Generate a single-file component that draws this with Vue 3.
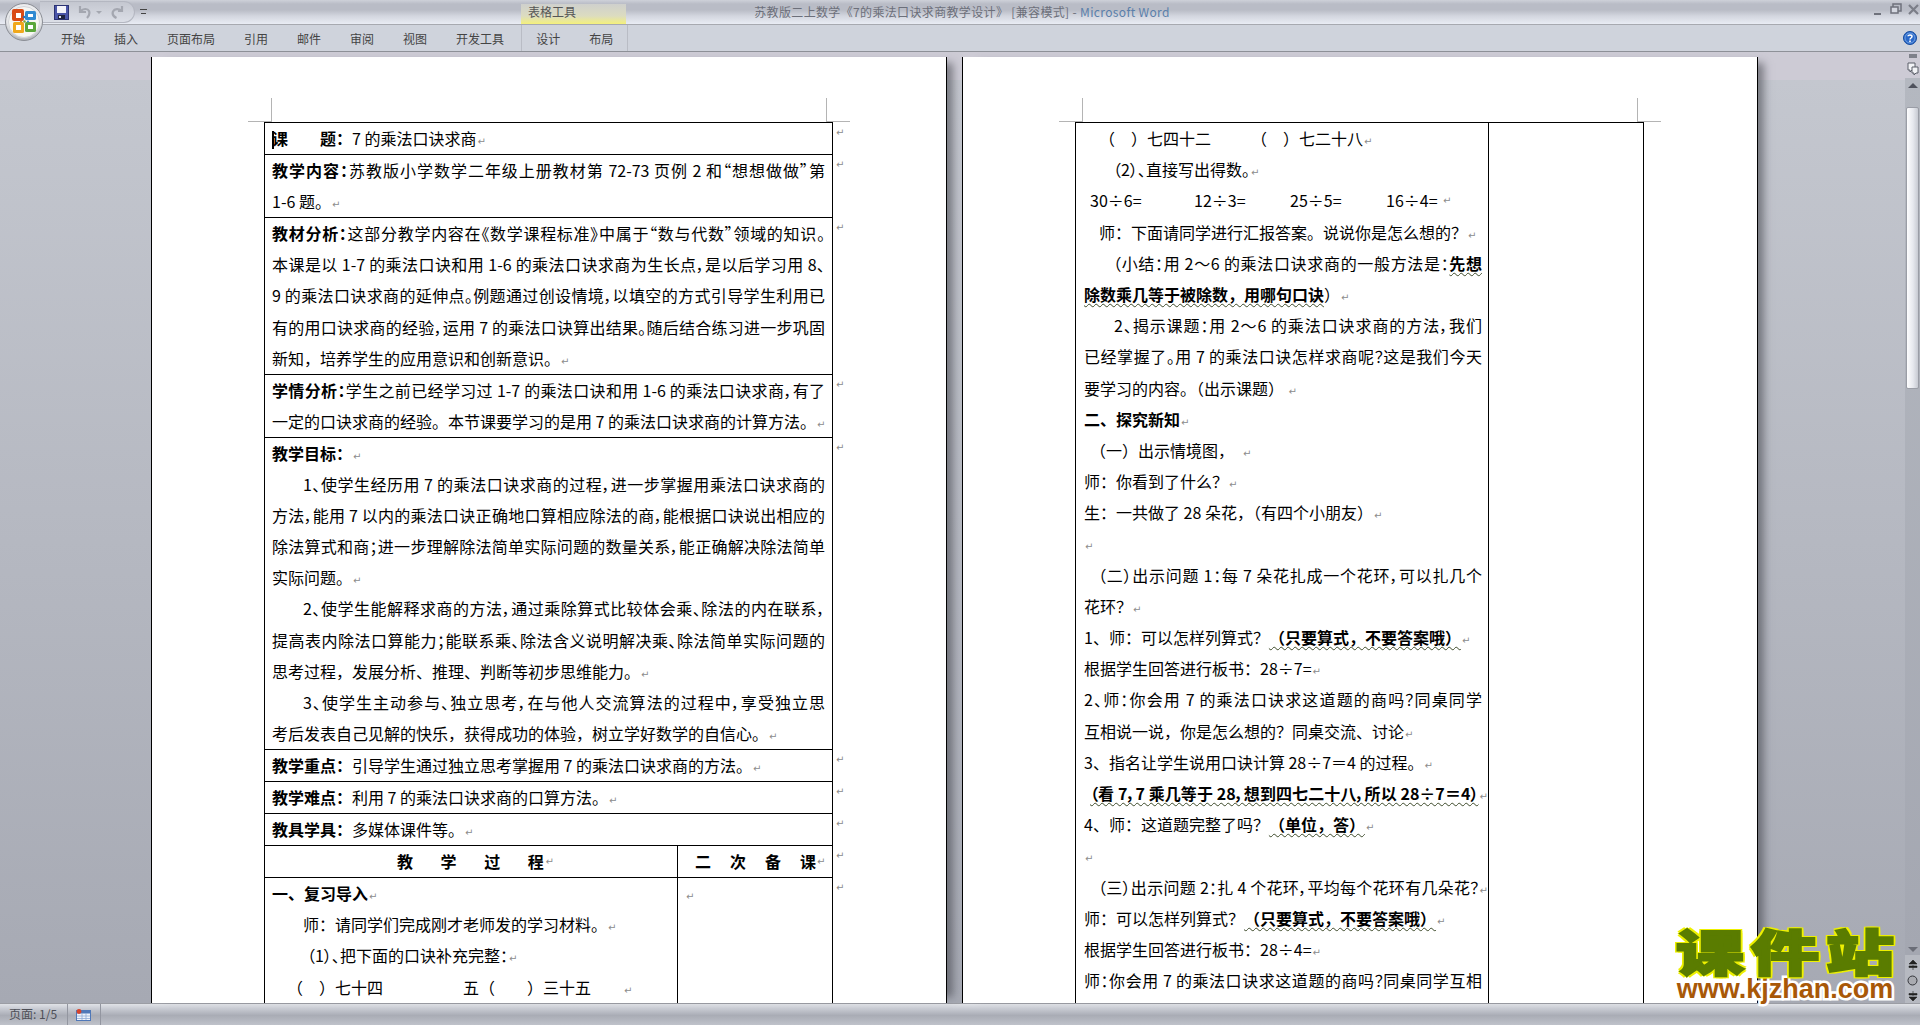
<template>
  <div class="word">
    <!-- title bar -->
    <header class="titlebar">
      <div class="tb-left">
        <div class="qat">
          <svg class="qi" width="15" height="15" viewBox="0 0 15 15">
            <rect x="0.5" y="0.5" width="14" height="14" fill="#4a55a8" stroke="#2b3272" />
            <rect x="3" y="1" width="9" height="7" fill="#f4f4fa" />
            <rect x="4" y="10" width="7" height="4" fill="#20243f" />
            <rect x="5" y="11" width="2" height="2" fill="#dfe2ee" />
          </svg>
          <svg class="qi undo" width="13" height="14" viewBox="0 0 13 14">
            <path d="M2 1v6h6M2.5 6.5C5 3.5 9.5 3 11 6c1 2.500 0 5-2 7" fill="none" stroke="#a4a7b0" stroke-width="2.200" />
          </svg>
          <span class="tiny-arrow"></span>
          <svg class="qi redo" width="13" height="14" viewBox="0 0 13 14">
            <path d="M11 1v5H7M10.500 6C8 3.500 3.500 3.500 2 6.500c-1 2.500 0.500 5 3.500 6.500" fill="none" stroke="#a4a7b0" stroke-width="2.200" />
          </svg>
        </div>
        <span class="customize"></span>
        <div class="ctx-title">表格工具</div>
      </div>
      <div class="doc-title">苏教版二上数学《7的乘法口诀求商教学设计》 [兼容模式] - <span class="app-name">Microsoft Word</span></div>
      <div class="tb-right">
        <svg width="47" height="16" viewBox="0 0 47 16">
          <rect x="1" y="12" width="7" height="2" fill="#6f727c" />
          <rect x="20" y="3" width="8" height="7" fill="none" stroke="#6f727c" stroke-width="1.500" />
          <rect x="18" y="6" width="7" height="6" fill="#d4d7e0" stroke="#6f727c" stroke-width="1.500" />
          <path d="M36 4l9 9M45 4l-9 9" stroke="#7b7e88" stroke-width="2.200" />
        </svg>
      </div>
    </header>

    <!-- ribbon tabs -->
    <nav class="ribbon">
      <span v-for="t in tabs" :key="t">{{ t }}</span>
      <div class="ctx-tabs">
        <span>设计</span>
        <span>布局</span>
      </div>
      <svg class="help" width="14" height="14" viewBox="0 0 14 14">
        <circle cx="7" cy="7" r="6.500" fill="#2a68c8" stroke="#134a9e" />
        <circle cx="7" cy="7" r="5" fill="none" stroke="#8db8ee" stroke-width="0.700" />
        <path d="M5 5.200C5 3.600 9 3.500 9 5.500c0 1.500-2 1.500-2 3" fill="none" stroke="#fff" stroke-width="1.500" />
        <rect x="6.200" y="9.500" width="1.600" height="1.600" fill="#fff" />
      </svg>
    </nav>

    <!-- office orb sits over title bar and ribbon -->
    <svg class="orb" width="38" height="38" viewBox="0 0 38 38">
      <defs>
        <radialGradient id="orbFill" cx="50%" cy="35%" r="65%">
          <stop offset="0" stop-color="#fbfbfb" />
          <stop offset="0.75" stop-color="#e4e5e8" />
          <stop offset="1" stop-color="#a9acb2" />
        </radialGradient>
      </defs>
      <circle cx="19" cy="19" r="18.500" fill="url(#orbFill)" stroke="#8b8e95" />
      <circle cx="19" cy="19" r="15.500" fill="#f6f6f2" stroke="#d3d5da" />
      <rect x="7" y="6" width="12" height="12" rx="2" fill="#d94b16" />
      <rect x="11" y="10" width="5" height="5" fill="#fff" />
      <rect x="20" y="8" width="11" height="9" rx="1.500" fill="#2f8ad2" />
      <rect x="23" y="11" width="5" height="3" fill="#fff" />
      <rect x="8" y="19" width="11" height="11" rx="1.500" fill="#f0a81c" />
      <rect x="11" y="22" width="5" height="5" fill="#fff" />
      <rect x="20" y="19" width="11" height="10" rx="1.500" fill="#5aa63a" />
      <rect x="23" y="22" width="5" height="4" fill="#fff" />
      <circle cx="19" cy="14" r="1.200" fill="#2f6fb5" />
      <circle cx="19.500" cy="18.500" r="1.200" fill="#7aa43a" />
      <circle cx="16" cy="18.500" r="1.100" fill="#e08a20" />
      <circle cx="23" cy="18.500" r="1.100" fill="#3f9ad6" />
    </svg>

    <div class="workspace">
      <main class="docs">
        <div class="pages">
          <!-- page one -->
          <section class="page">
            <i class="crop cl"></i>
            <i class="crop cr"></i>
            <div class="tbl">
              <div class="row">
                <div class="cell"><p class="ln"><span class="caret"></span><b>课　　题：</b>7 的乘法口诀求商<i class="pm">↵</i></p></div>
                <i class="pm rm">↵</i>
              </div>
              <div class="row">
                <div class="cell">
                  <p class="ln fill"><b>教学内容：</b>苏教版小学数学二年级上册教材第 72-73 页例 2 和“想想做做”第</p>
                  <p class="ln">1-6 题。<i class="pm">↵</i></p>
                </div>
                <i class="pm rm">↵</i>
              </div>
              <div class="row">
                <div class="cell">
                  <p class="ln fill"><b>教材分析：</b>这部分教学内容在《数学课程标准》中属于“数与代数”领域的知识。</p>
                  <p class="ln fill">本课是以 1-7 的乘法口诀和用 1-6 的乘法口诀求商为生长点，是以后学习用 8、</p>
                  <p class="ln fill">9 的乘法口诀求商的延伸点。例题通过创设情境，以填空的方式引导学生利用已</p>
                  <p class="ln fill">有的用口诀求商的经验，运用 7 的乘法口诀算出结果。随后结合练习进一步巩固</p>
                  <p class="ln">新知，培养学生的应用意识和创新意识。<i class="pm">↵</i></p>
                </div>
                <i class="pm rm">↵</i>
              </div>
              <div class="row">
                <div class="cell">
                  <p class="ln fill"><b>学情分析：</b>学生之前已经学习过 1-7 的乘法口诀和用 1-6 的乘法口诀求商，有了</p>
                  <p class="ln">一定的口诀求商的经验。本节课要学习的是用 7 的乘法口诀求商的计算方法。<i class="pm">↵</i></p>
                </div>
                <i class="pm rm">↵</i>
              </div>
              <div class="row">
                <div class="cell">
                  <p class="ln"><b>教学目标：</b><i class="pm">↵</i></p>
                  <p class="ln fill i31">1、使学生经历用 7 的乘法口诀求商的过程，进一步掌握用乘法口诀求商的</p>
                  <p class="ln fill">方法，能用 7 以内的乘法口诀正确地口算相应除法的商，能根据口诀说出相应的</p>
                  <p class="ln fill">除法算式和商；进一步理解除法简单实际问题的数量关系，能正确解决除法简单</p>
                  <p class="ln">实际问题。<i class="pm">↵</i></p>
                  <p class="ln fill i31">2、使学生能解释求商的方法，通过乘除算式比较体会乘、除法的内在联系，</p>
                  <p class="ln fill">提高表内除法口算能力；能联系乘、除法含义说明解决乘、除法简单实际问题的</p>
                  <p class="ln">思考过程，发展分析、推理、判断等初步思维能力。<i class="pm">↵</i></p>
                  <p class="ln fill i31">3、使学生主动参与、独立思考，在与他人交流算法的过程中，享受独立思</p>
                  <p class="ln">考后发表自己见解的快乐，获得成功的体验，树立学好数学的自信心。<i class="pm">↵</i></p>
                </div>
                <i class="pm rm">↵</i>
              </div>
              <div class="row">
                <div class="cell"><p class="ln"><b>教学重点：</b>引导学生通过独立思考掌握用 7 的乘法口诀求商的方法。<i class="pm">↵</i></p></div>
                <i class="pm rm">↵</i>
              </div>
              <div class="row">
                <div class="cell"><p class="ln"><b>教学难点：</b>利用 7 的乘法口诀求商的口算方法。<i class="pm">↵</i></p></div>
                <i class="pm rm">↵</i>
              </div>
              <div class="row">
                <div class="cell"><p class="ln"><b>教具学具：</b>多媒体课件等。<i class="pm">↵</i></p></div>
                <i class="pm rm">↵</i>
              </div>
              <div class="row">
                <div class="cell split">
                  <p class="ln head-a"><b>教</b><b>学</b><b>过</b><b>程</b><i class="pm">↵</i></p>
                  <p class="ln head-b"><b>二</b><b>次</b><b>备</b><b>课</b><i class="pm">↵</i></p>
                </div>
                <i class="pm rm">↵</i>
              </div>
              <div class="row grow">
                <div class="cell split">
                  <div class="col-a">
                    <p class="ln"><b>一、复习导入</b><i class="pm">↵</i></p>
                    <p class="ln i31">师：请同学们完成刚才老师发的学习材料。<i class="pm">↵</i></p>
                    <p class="ln tight i35">（1）、把下面的口诀补充完整：<i class="pm">↵</i></p>
                    <p class="ln i15">（　）七十四　　　　　五（　　）三十五　　<i class="pm">↵</i></p>
                  </div>
                  <div class="col-b"><p class="ln"><i class="pm">↵</i></p></div>
                </div>
                <i class="pm rm">↵</i>
              </div>
            </div>
          </section>

          <!-- page two -->
          <section class="page">
            <i class="crop cl"></i>
            <i class="crop cr"></i>
            <div class="tbl">
              <div class="row grow">
                <div class="cell split">
                  <div class="col-a wide">
                    <p class="ln i15">（　）七四十二　　　（　）七二十八<i class="pm">↵</i></p>
                    <p class="ln tight i29">（2）、直接写出得数。<i class="pm">↵</i></p>
                    <div class="ln sums">
                      <span>30÷6=</span><span>12÷3=</span><span>25÷5=</span><span>16÷4=</span><i class="pm">↵</i>
                    </div>
                    <p class="ln i15">师：下面请同学进行汇报答案。说说你是怎么想的？<i class="pm">↵</i></p>
                    <p class="ln fill i29">（小结：用 2～6 的乘法口诀求商的一般方法是：<b class="wavy">先想</b></p>
                    <p class="ln"><b class="wavy">除数乘几等于被除数，用哪句口诀</b>）<i class="pm">↵</i></p>
                    <p class="ln fill i30">2、揭示课题：用 2～6 的乘法口诀求商的方法，我们</p>
                    <p class="ln fill">已经掌握了。用 7 的乘法口诀怎样求商呢？这是我们今天</p>
                    <p class="ln">要学习的内容。（出示课题） <i class="pm">↵</i></p>
                    <p class="ln"><b>二、探究新知</b><i class="pm">↵</i></p>
                    <p class="ln i6">（一）出示情境图，　<i class="pm">↵</i></p>
                    <p class="ln">师：你看到了什么？<i class="pm">↵</i></p>
                    <p class="ln">生：一共做了 28 朵花，（有四个小朋友）<i class="pm">↵</i></p>
                    <p class="ln"><i class="pm">↵</i></p>
                    <p class="ln fill i14">（二）出示问题 1：每 7 朵花扎成一个花环，可以扎几个</p>
                    <p class="ln">花环？<i class="pm">↵</i></p>
                    <p class="ln">1、师：可以怎样列算式？<b class="wavy">（只要算式，不要答案哦）</b><i class="pm">↵</i></p>
                    <p class="ln">根据学生回答进行板书：28÷7=<i class="pm">↵</i></p>
                    <p class="ln fill">2、师：你会用 7 的乘法口诀求这道题的商吗？同桌同学</p>
                    <p class="ln">互相说一说，你是怎么想的？同桌交流、讨论<i class="pm">↵</i></p>
                    <p class="ln">3、指名让学生说用口诀计算 28÷7＝4 的过程。<i class="pm">↵</i></p>
                    <p class="ln fill over i6"><b class="wavy">（看 7，7 乘几等于 28，想到四七二十八，所以 28÷7＝4）</b><i class="pm">↵</i></p>
                    <p class="ln">4、师：这道题完整了吗？<b class="wavy">（单位，答）</b><i class="pm">↵</i></p>
                    <p class="ln"><i class="pm">↵</i></p>
                    <p class="ln fill over i14">（三）出示问题 2：扎 4 个花环，平均每个花环有几朵花？<i class="pm">↵</i></p>
                    <p class="ln">师：可以怎样列算式？<b class="wavy">（只要算式，不要答案哦）</b><i class="pm">↵</i></p>
                    <p class="ln">根据学生回答进行板书：28÷4=<i class="pm">↵</i></p>
                    <p class="ln fill">师：你会用 7 的乘法口诀求这道题的商吗？同桌同学互相</p>
                  </div>
                  <div class="col-b"></div>
                </div>
              </div>
            </div>
          </section>
        </div>
      </main>

      <!-- vertical scrollbar -->
      <aside class="scroll">
        <span class="dash"></span>
        <svg class="split-btn" width="12" height="13" viewBox="0 0 12 13">
          <path d="M1 1h7v7H5l-2 2V8H1z" fill="#f2f3f6" stroke="#5b5e69" />
          <path d="M5 5h6v6h-2l-2 2v-2H5z" fill="#f2f3f6" stroke="#5b5e69" />
        </svg>
        <div class="track">
          <span class="arrow up"></span>
          <div class="thumb"></div>
          <span class="arrow down"></span>
        </div>
        <div class="nav-btns">
          <svg width="10" height="10" viewBox="0 0 10 10"><path d="M5 0l4 4H1zM1 6h8v1.500H1zM5 5v5" fill="#222" stroke="#222" stroke-width="0.600" /></svg>
          <svg width="11" height="11" viewBox="0 0 11 11"><circle cx="5.500" cy="5.500" r="4.500" fill="#a9abb1" stroke="#33353b" /></svg>
          <svg width="10" height="10" viewBox="0 0 10 10"><path d="M5 10l4-4H1zM1 2.500h8V4H1zM5 0v5" fill="#222" stroke="#222" stroke-width="0.600" /></svg>
        </div>
      </aside>
    </div>

    <!-- status bar -->
    <footer class="status">
      <span class="st-page">页面: 1/5</span>
      <span class="st-icon">
        <svg width="15" height="12" viewBox="0 0 15 12">
          <rect x="0.500" y="1.500" width="14" height="10" fill="#eef3fb" stroke="#4f78b8" />
          <rect x="1" y="2" width="13" height="2.500" fill="#4f78b8" />
          <path d="M1 7h13M1 9.500h13M6 4v7M10 4v7" stroke="#8eaad6" stroke-width="0.800" />
          <circle cx="3" cy="2.500" r="2.400" fill="#d8432c" />
        </svg>
      </span>
    </footer>

    <div class="stamp">
      <div class="stamp-cn">课件站</div>
      <div class="stamp-url">www.kjzhan.com</div>
    </div>
  </div>
</template>

<script setup>
const tabs = ['开始', '插入', '页面布局', '引用', '邮件', '审阅', '视图', '开发工具'];
</script>

<style>
body {
  margin: 0;
  background: #c4c7cf;
}
</style>

<style scoped>
.word {
  position: relative;
  width: 1920px;
  height: 1025px;
  overflow: hidden;
  display: flex;
  flex-direction: column;
  font-family: "Noto Sans CJK SC", "Noto Sans", sans-serif;
  color: #000;
}

.titlebar {
  height: 24px;
  flex: none;
  display: grid;
  grid-template-columns: 1fr auto 1fr;
  background: linear-gradient(#ced1d9 0, #b9bcc6 4px, #b9bcc6 10px, #d3d6df 16px, #e9ecf4 24px);
  border-bottom: 1px solid #a7a9b0;
}

.tb-left {
  display: flex;
  align-items: flex-start;
  padding-left: 40px;
}

.qat {
  box-sizing: border-box;
  width: 95px;
  height: 22px;
  margin-top: 1px;
  display: flex;
  align-items: center;
  padding-left: 14px;
  border: 1px solid #b4b7c1;
  border-left: none;
  border-radius: 0 11px 11px 0;
  background: linear-gradient(#c4c7d0, #dcdfe7);
}

.qi {
  flex: none;
}

.undo {
  margin-left: 9px;
}

.tiny-arrow {
  width: 0;
  height: 0;
  margin-left: 5px;
  border: 3px solid transparent;
  border-top-color: #a4a7b0;
  border-bottom: none;
}

.redo {
  margin-left: 9px;
}

.customize {
  width: 7px;
  height: 3px;
  margin: 9px 0 0 5px;
  border-top: 1px solid #444;
  border-bottom: 3px solid transparent;
  position: relative;
  background: linear-gradient(#444, #444) center 3px / 5px 1px no-repeat;
}

.ctx-title {
  box-sizing: border-box;
  width: 105px;
  height: 20px;
  margin: 4px 0 0 374px;
  padding-left: 7px;
  font-size: 12px;
  line-height: 15px;
  color: #555;
  background: linear-gradient(#cfd0cd, #dcdcc0 60%, #f4f07c);
}

.doc-title {
  padding-left: 4px;
  font-size: 12px;
  line-height: 24px;
  letter-spacing: 0.35px;
  color: #6c6f7a;
  white-space: nowrap;
}

.app-name {
  color: #5a7fab;
}

.tb-right {
  display: flex;
  justify-content: flex-end;
  padding-top: 1px;
}

.ribbon {
  position: relative;
  flex: none;
  height: 26px;
  display: flex;
  align-items: center;
  gap: 29px;
  padding-left: 61px;
  font-size: 12px;
  color: #444;
  background: #cfd3dc;
  border-bottom: 1px solid #8e9198;
  white-space: nowrap;
}

.ctx-tabs {
  display: flex;
  gap: 29px;
  align-items: center;
  align-self: stretch;
  margin-left: -12px;
  padding: 0 14px;
  border-left: 1px solid #b9bcc5;
  border-right: 1px solid #b9bcc5;
}

.help {
  position: absolute;
  left: 1903px;
  top: 6px;
}

.orb {
  position: absolute;
  left: 5px;
  top: 3px;
}

.workspace {
  flex: 1;
  min-height: 0;
  display: flex;
}

.docs {
  flex: 1;
  min-width: 0;
  display: flex;
  padding-top: 5px;
  background: linear-gradient(#cdcbd5 0, #cdcbd5 28px, #c4c7cf 28px, #a6a9b3 100%);
}

.pages {
  display: flex;
  gap: 15px;
  padding-left: 151px;
}

.page {
  position: relative;
  box-sizing: border-box;
  width: 796px;
  padding: 65px 0 0 112px;
  background: #fff;
  border-left: 1px solid #000;
  border-right: 1px solid #000;
  box-shadow: 12px 0 8px -6px rgba(60, 62, 70, 0.55);
  overflow: hidden;
}

.crop {
  position: absolute;
  background: none;
  border: solid #b4b4b4;
  border-width: 0;
  top: 41px;
  width: 23px;
  height: 23px;
  border-bottom-width: 1px;
}

.cl {
  left: 96px;
  border-right-width: 1px;
}

.cr {
  left: 674px;
  border-left-width: 1px;
}

.tbl {
  display: flex;
  flex-direction: column;
  height: 100%;
}

.row {
  display: flex;
  align-items: flex-start;
}

.grow {
  flex: 1;
  align-items: stretch;
}

.cell {
  box-sizing: border-box;
  flex: none;
  width: 569px;
  padding: 0 7px;
  border: 1px solid #000;
  border-width: 1px 1px 0;
}

.split {
  display: grid;
  grid-template-columns: 413px 1fr;
  padding: 0;
}

.col-a {
  box-sizing: border-box;
  padding: 0 6px 0 7px;
  border-right: 1px solid #000;
  min-width: 0;
}

.col-a.wide {
  padding-left: 8px;
}

.col-b {
  padding-left: 7px;
}

.ln {
  margin: 0;
  font-size: 16px;
  line-height: 31.1px;
  height: 31.1px;
  white-space: nowrap;
}

.wide .ln {
  line-height: 31.2px;
  height: 31.2px;
}

.fill {
  text-align: justify;
  text-align-last: justify;
  white-space: normal;
  overflow: visible;
  font-feature-settings: "palt";
}

.tight {
  font-feature-settings: "palt";
}

.over {
  margin-right: -6px;
}

.i6 { padding-left: 6px; }
.i14 { padding-left: 14px; }
.i15 { padding-left: 15px; }
.i29 { padding-left: 29px; }
.i30 { padding-left: 30px; }
.i31 { padding-left: 31px; }
.i35 { padding-left: 35px; }

.ln b {
  font-weight: 700;
}

.wavy {
  text-decoration: underline wavy #3d4a2a 1px;
  text-decoration-skip-ink: none;
  text-underline-offset: 2px;
}

.caret {
  display: inline-block;
  width: 2px;
  height: 18px;
  margin-right: -2px;
  vertical-align: -4px;
  background: #000;
}

.pm {
  font-family: "DejaVu Sans", sans-serif;
  font-size: 10px;
  font-style: normal;
  font-weight: 400;
  color: #8c8c8c;
  margin-left: 1px;
}

.rm {
  flex: none;
  margin-left: 3px;
  line-height: 22px;
}

.head-a {
  display: flex;
  gap: 27.6px;
  padding-left: 132px;
  border-right: 1px solid #000;
}

.head-a .pm {
  margin-left: -26px;
}

.head-b {
  display: flex;
  gap: 19px;
  padding-left: 17px;
}

.head-b .pm {
  margin-left: -18px;
}

.sums {
  display: grid;
  grid-template-columns: 104px 96px 96px 56px auto;
  padding-left: 6px;
  justify-content: start;
}

.scroll {
  flex: none;
  width: 15px;
  display: flex;
  flex-direction: column;
  align-items: center;
  background: #cdcbd5;
}

.dash {
  width: 8px;
  height: 4px;
  margin-top: 2px;
  background: #7e818a;
}

.split-btn {
  margin: 4px 0 3px;
}

.track {
  flex: 1;
  width: 100%;
  display: flex;
  flex-direction: column;
  align-items: center;
  background: linear-gradient(#b4b8c0, #a4a7b1);
}

.arrow {
  width: 0;
  height: 0;
  border: 5px solid transparent;
}

.up {
  margin-top: 5px;
  border-top: none;
  border-bottom: 5px solid #4f525c;
}

.thumb {
  box-sizing: border-box;
  width: 13px;
  height: 282px;
  margin-top: 19px;
  background: linear-gradient(90deg, #fdfdfe, #e6e8ee 55%, #c7cad2);
  border: 1px solid #9a9da6;
  border-radius: 2px;
}

.down {
  margin-top: auto;
  margin-bottom: 3px;
  border-bottom: none;
  border-top: 5px solid #6a6d77;
}

.nav-btns {
  box-sizing: border-box;
  width: 100%;
  height: 48px;
  display: flex;
  flex-direction: column;
  align-items: center;
  justify-content: space-around;
  padding: 2px 0 0;
  background: #b6b9c1;
}

.status {
  flex: none;
  box-sizing: border-box;
  height: 22px;
  display: flex;
  font-size: 12px;
  color: #4d4f57;
  background: linear-gradient(#e0e2e7, #c5c8d0 25%, #a9acb5 55%, #bfc2ca);
  border-top: 1px solid #9b9da4;
}

.st-page {
  width: 68px;
  box-sizing: border-box;
  padding-left: 9px;
  line-height: 20px;
  border-right: 1px solid #9396a0;
}

.st-icon {
  width: 33px;
  display: flex;
  align-items: center;
  padding-left: 8px;
  box-sizing: border-box;
  border-right: 1px solid #9396a0;
}

.stamp {
  position: absolute;
  left: 1670px;
  top: 925px;
  width: 230px;
  text-align: center;
}

.stamp-cn {
  height: 52px;
  font-size: 68px;
  font-weight: 900;
  line-height: 70px;
  letter-spacing: 7px;
  margin-right: -7px;
  color: #5a7c00;
  -webkit-text-stroke: 3px #5a7c00;
  text-shadow: 3px 0 #eef000, -3px 0 #eef000, 0 3px #eef000, 0 -3px #eef000, 3px 3px #eef000, -3px 3px #eef000,
    3px -3px #eef000, -3px -3px #eef000;
  transform: scaleY(0.72);
  transform-origin: top;
}

.stamp-url {
  font-family: "Liberation Sans", sans-serif;
  font-size: 27px;
  font-weight: 700;
  line-height: 24px;
  color: #a85808;
  -webkit-text-stroke: 5px #fff;
  paint-order: stroke fill;
}
</style>
